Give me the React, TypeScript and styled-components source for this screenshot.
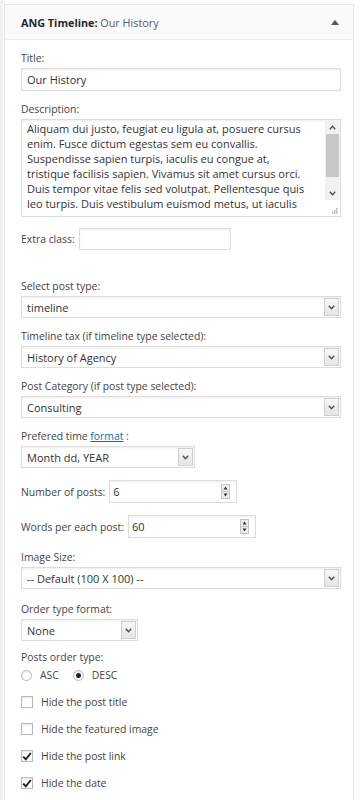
import React from 'react';
import styled, { createGlobalStyle } from 'styled-components';

const GlobalStyle = createGlobalStyle`
  html, body {
    margin: 0;
    padding: 0;
    background: #ffffff;
  }
  body {
    font-family: 'Open Sans', 'Liberation Sans', sans-serif;
  }
  * {
    box-sizing: border-box;
  }
`;

const Page = styled.div`
  min-height: 800px;
  border-left: 3px solid #f1f1f1;
  padding: 4px 0 0 1px;
`;

const Panel = styled.div`
  width: 350px;
  min-height: 820px;
  border: 1px solid #e5e5e5;
  background: #ffffff;
  box-shadow: 0 1px 1px rgba(0, 0, 0, 0.04);
`;

const Header = styled.div`
  height: 35px;
  display: flex;
  align-items: center;
  justify-content: space-between;
  padding: 0 14px 0 16px;
  background: #fafafa;
  border-bottom: 1px solid #eeeeee;
`;

const HeaderTitle = styled.h3`
  margin: 0;
  font-size: 10.8px;
  font-weight: 700;
  color: #23282d;
`;

const HeaderSub = styled.span`
  font-weight: 400;
  color: #555d66;
`;

const Body = styled.div`
  padding: 10px 12px 16px 16px;
`;

interface IFieldProps {
  $mb: number;
}

const Field = styled.div<IFieldProps>`
  margin-bottom: ${({ $mb }) => $mb}px;
`;

const Label = styled.label`
  display: block;
  font-size: 10.4px;
  line-height: 16px;
  color: #444444;
  margin-bottom: 2px;
`;

const InlineLabel = styled.span`
  font-size: 10.4px;
  line-height: 16px;
  color: #444444;
  white-space: nowrap;
`;

const Link = styled.a`
  color: #0073aa;
  text-decoration: underline;
`;

const Row = styled.div<IFieldProps>`
  display: flex;
  align-items: center;
  gap: 4px;
  margin-bottom: ${({ $mb }) => $mb}px;
`;

interface IBoxProps {
  $width?: number;
  $height?: number;
}

const TextInput = styled.input<IBoxProps>`
  display: block;
  width: ${({ $width }) => ($width ? `${$width}px` : '100%')};
  height: ${({ $height }) => $height ?? 23}px;
  margin: 0;
  padding: 0 5px;
  border: 1px solid #dddddd;
  border-radius: 0;
  box-shadow: inset 0 1px 2px rgba(0, 0, 0, 0.07);
  background: #ffffff;
  font-family: inherit;
  font-size: 11px;
  color: #333333;
  outline: none;
`;

const TextArea = styled.div`
  display: flex;
  height: 98px;
  border: 1px solid #dddddd;
  box-shadow: inset 0 1px 2px rgba(0, 0, 0, 0.07);
  background: #ffffff;
`;

const TextAreaBody = styled.div`
  flex: 1;
  overflow: hidden;
  padding: 1px 6px 0 5px;
  font-size: 11px;
  line-height: 15px;
  color: #333333;
  white-space: nowrap;
`;

const ScrollColumn = styled.div`
  width: 15px;
  display: flex;
  flex-direction: column;
`;

const ScrollTrack = styled.div`
  flex: 1;
  display: flex;
  flex-direction: column;
  align-items: center;
  background: #f1f1f1;
`;

const ScrollButton = styled.div`
  height: 14px;
  width: 100%;
  display: flex;
  align-items: center;
  justify-content: center;
`;

const ScrollThumb = styled.div`
  width: 13px;
  height: 43px;
  background: #c8c8c8;
`;

const ScrollSpacer = styled.div`
  flex: 1;
`;

const ResizeCorner = styled.div`
  height: 16px;
  display: flex;
  align-items: flex-end;
  justify-content: flex-end;
  padding: 0 2px 2px 0;
  background: #ffffff;
`;

const SelectBox = styled.div<IBoxProps>`
  display: flex;
  align-items: stretch;
  width: ${({ $width }) => ($width ? `${$width}px` : '100%')};
  height: 22px;
  padding: 1px;
  border: 1px solid #dddddd;
  box-shadow: inset 0 1px 2px rgba(0, 0, 0, 0.07);
  background: #ffffff;
`;

const SelectValue = styled.span`
  flex: 1;
  display: flex;
  align-items: center;
  padding-left: 4px;
  font-size: 11px;
  color: #333333;
  white-space: nowrap;
  overflow: hidden;
`;

const SelectArrow = styled.span`
  width: 15px;
  display: flex;
  align-items: center;
  justify-content: center;
  border: 1px solid #cfcfcf;
  background: linear-gradient(#f7f7f7, #e6e6e6);
`;

const NumberBox = styled.div<IBoxProps>`
  display: flex;
  align-items: center;
  justify-content: space-between;
  width: ${({ $width }) => $width}px;
  height: 23px;
  padding: 0 6px 0 3px;
  border: 1px solid #dddddd;
  box-shadow: inset 0 1px 2px rgba(0, 0, 0, 0.07);
  background: #ffffff;
  font-size: 11px;
  color: #333333;
`;

const Choice = styled.label`
  display: flex;
  align-items: center;
  gap: 8px;
  font-size: 10.4px;
  line-height: 16px;
  color: #444444;
`;

const RadioGroup = styled.div<IFieldProps>`
  display: flex;
  align-items: center;
  gap: 14px;
  margin-bottom: ${({ $mb }) => $mb}px;
`;

interface ICheckedProps {
  $checked: boolean;
}

const RadioDot = styled.span<ICheckedProps>`
  width: 11px;
  height: 11px;
  border-radius: 50%;
  border: 1px solid #b4b9be;
  background: #ffffff;
  box-shadow: inset 0 1px 2px rgba(0, 0, 0, 0.1);
  display: flex;
  align-items: center;
  justify-content: center;
  &::after {
    content: '';
    width: 5px;
    height: 5px;
    border-radius: 50%;
    background: ${({ $checked }) => ($checked ? '#222222' : 'transparent')};
  }
`;

const CheckRow = styled(Choice)`
  margin-bottom: 11px;
`;

const CheckBox = styled.span`
  width: 12px;
  height: 12px;
  border: 1px solid #b4b9be;
  background: #ffffff;
  box-shadow: inset 0 1px 2px rgba(0, 0, 0, 0.1);
  display: flex;
  align-items: center;
  justify-content: center;
`;

const Chevron = ({ up }: { up?: boolean }) => (
  <svg width="7" height="5" viewBox="0 0 7 5">
    <path
      d={up ? 'M0.8 4.2 L3.5 1.3 L6.2 4.2' : 'M0.8 0.8 L3.5 3.7 L6.2 0.8'}
      fill="none"
      stroke="#505050"
      strokeWidth="1.4"
    />
  </svg>
);

const Spinner = () => (
  <svg width="9" height="15" viewBox="0 0 9 15">
    <rect x="0.5" y="0.5" width="8" height="14" fill="#eeeeee" stroke="#c4c4c4" />
    <line x1="0.5" y1="7.5" x2="8.5" y2="7.5" stroke="#c4c4c4" />
    <polygon points="2.5,5.5 6.5,5.5 4.5,2.5" fill="#333333" />
    <polygon points="2.5,9.5 6.5,9.5 4.5,12.5" fill="#333333" />
  </svg>
);

const Tick = () => (
  <svg width="10" height="9" viewBox="0 0 10 9">
    <path d="M1.2 4.6 L3.8 7.4 L8.8 1" fill="none" stroke="#1e1e1e" strokeWidth="1.9" />
  </svg>
);

const Select: React.FC<{ value: string; width?: number }> = ({ value, width }) => (
  <SelectBox $width={width}>
    <SelectValue>{value}</SelectValue>
    <SelectArrow>
      <Chevron />
    </SelectArrow>
  </SelectBox>
);

const descriptionLines = [
  'Aliquam dui justo, feugiat eu ligula at, posuere cursus',
  'enim. Fusce dictum egestas sem eu convallis.',
  'Suspendisse sapien turpis, iaculis eu congue at,',
  'tristique facilisis sapien. Vivamus sit amet cursus orci.',
  'Duis tempor vitae felis sed volutpat. Pellentesque quis',
  'leo turpis. Duis vestibulum euismod metus, ut iaculis'
];

const checks = [
  { title: 'Hide the post title', checked: false },
  { title: 'Hide the featured image', checked: false },
  { title: 'Hide the post link', checked: true },
  { title: 'Hide the date', checked: true }
];

const App: React.FC = () => {
  return (
    <Page>
      <GlobalStyle />
      <Panel>
        <Header>
          <HeaderTitle>
            ANG Timeline: <HeaderSub>Our History</HeaderSub>
          </HeaderTitle>
          <svg width="8" height="5" viewBox="0 0 8 5">
            <polygon points="0,5 8,5 4,0" fill="#50575e" />
          </svg>
        </Header>
        <Body>
          <Field $mb={10}>
            <Label>Title:</Label>
            <TextInput defaultValue="Our History" />
          </Field>

          <Field $mb={11}>
            <Label>Description:</Label>
            <TextArea>
              <TextAreaBody>
                {descriptionLines.map((line, index) => (
                  <div key={index}>{line}</div>
                ))}
              </TextAreaBody>
              <ScrollColumn>
                <ScrollTrack>
                  <ScrollButton>
                    <Chevron up />
                  </ScrollButton>
                  <ScrollThumb />
                  <ScrollSpacer />
                  <ScrollButton>
                    <Chevron />
                  </ScrollButton>
                </ScrollTrack>
                <ResizeCorner>
                  <svg width="6" height="6" viewBox="0 0 6 6">
                    <rect x="4" y="0" width="1.5" height="1.5" fill="#b0b0b0" />
                    <rect x="2" y="2" width="1.5" height="1.5" fill="#b0b0b0" />
                    <rect x="4" y="2" width="1.5" height="1.5" fill="#b0b0b0" />
                    <rect x="0" y="4" width="1.5" height="1.5" fill="#b0b0b0" />
                    <rect x="2" y="4" width="1.5" height="1.5" fill="#b0b0b0" />
                    <rect x="4" y="4" width="1.5" height="1.5" fill="#b0b0b0" />
                  </svg>
                </ResizeCorner>
              </ScrollColumn>
            </TextArea>
          </Field>

          <Row $mb={28}>
            <InlineLabel>Extra class:</InlineLabel>
            <TextInput $width={152} $height={22} />
          </Row>

          <Field $mb={10}>
            <Label>Select post type:</Label>
            <Select value="timeline" />
          </Field>

          <Field $mb={10}>
            <Label>Timeline tax (if timeline type selected):</Label>
            <Select value="History of Agency" />
          </Field>

          <Field $mb={10}>
            <Label>Post Category (if post type selected):</Label>
            <Select value="Consulting" />
          </Field>

          <Field $mb={12}>
            <Label>
              Prefered time <Link href="#">format</Link> :
            </Label>
            <Select value="Month dd, YEAR" width={174} />
          </Field>

          <Row $mb={12}>
            <InlineLabel>Number of posts:</InlineLabel>
            <NumberBox $width={128}>
              <span>6</span>
              <Spinner />
            </NumberBox>
          </Row>

          <Row $mb={11}>
            <InlineLabel>Words per each post:</InlineLabel>
            <NumberBox $width={128}>
              <span>60</span>
              <Spinner />
            </NumberBox>
          </Row>

          <Field $mb={12}>
            <Label>Image Size:</Label>
            <Select value="-- Default (100 X 100) --" />
          </Field>

          <Field $mb={8}>
            <Label>Order type format:</Label>
            <Select value="None" width={117} />
          </Field>

          <Label>Posts order type:</Label>
          <RadioGroup $mb={11}>
            <Choice>
              <RadioDot $checked={false} />
              ASC
            </Choice>
            <Choice>
              <RadioDot $checked />
              DESC
            </Choice>
          </RadioGroup>

          {checks.map((item, index) => (
            <CheckRow key={index}>
              <CheckBox>{item.checked && <Tick />}</CheckBox>
              {item.title}
            </CheckRow>
          ))}
        </Body>
      </Panel>
    </Page>
  );
};

export default App;
